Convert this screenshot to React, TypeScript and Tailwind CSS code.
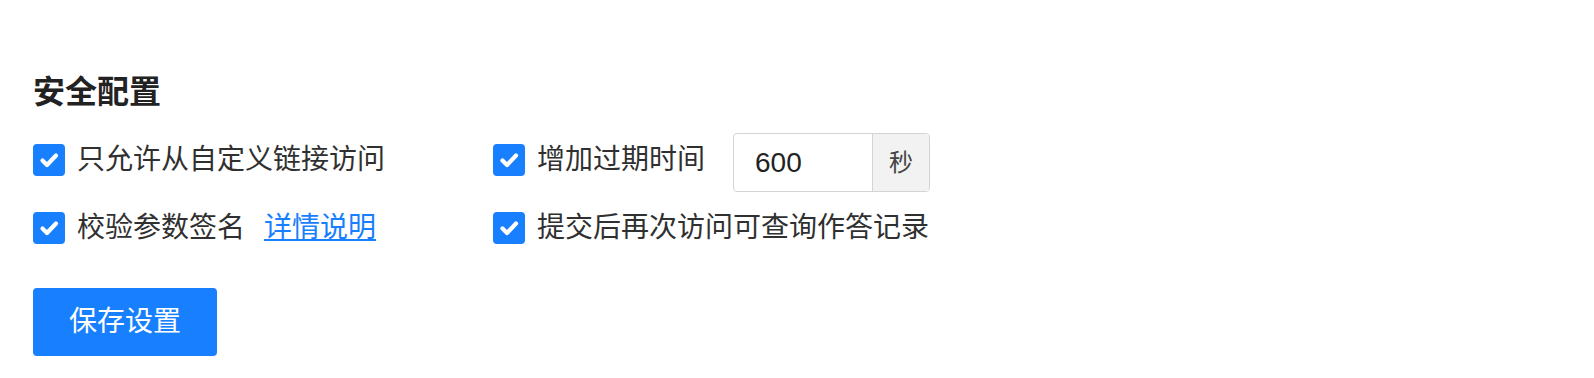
import React from "react";

function Check() {
  return (
    <span className="flex h-[32px] w-[32px] shrink-0 items-center justify-center rounded-[4px] bg-[#1880ff]">
      <svg width="32" height="32" viewBox="0 0 32 32" fill="none">
        <polyline
          points="9.5,16.5 14,21 23,11.5"
          stroke="#ffffff"
          strokeWidth="4.2"
          strokeLinecap="round"
          strokeLinejoin="round"
        />
      </svg>
    </span>
  );
}

function CheckItem({ children }: { children: React.ReactNode }) {
  return (
    <div className="flex items-center">
      <Check />
      <span className="ml-[12px] whitespace-nowrap text-[28px] leading-[32px] text-[#303030]">{children}</span>
    </div>
  );
}

export default function App() {
  return (
    <div
      className="h-[378px] w-[1594px] bg-white pl-[33px] pt-[70px]"
      style={{ fontFamily: '"Liberation Sans", "Noto Sans CJK SC", sans-serif' }}
    >
      <h2 className="text-[32px] font-bold leading-[44px] text-[#222222]">安全配置</h2>
      <div className="mt-[14px] grid grid-cols-[460px_auto] items-center gap-y-[20px]">
        <CheckItem>只允许从自定义链接访问</CheckItem>
        <div className="flex items-center">
          <CheckItem>增加过期时间</CheckItem>
          <div className="ml-[28px] mt-[5px] flex h-[59px] w-[197px] overflow-hidden rounded-[4px] border border-[#d4d4d4]">
            <div className="flex flex-1 items-center pl-[21px] text-[28px] text-[#222222]">600</div>
            <div className="flex w-[57px] items-center justify-center border-l border-[#d4d4d4] bg-[#f2f2f2] text-[24px] text-[#444444]">
              秒
            </div>
          </div>
        </div>
        <div className="flex items-center">
          <CheckItem>校验参数签名</CheckItem>
          <a className="ml-[19px] text-[28px] leading-[32px] text-[#1880ff] underline" href="#">
            详情说明
          </a>
        </div>
        <CheckItem>提交后再次访问可查询作答记录</CheckItem>
      </div>
      <button className="mt-[44px] h-[68px] rounded-[4px] bg-[#1880ff] px-[36px] text-[28px] text-white">
        保存设置
      </button>
    </div>
  );
}
